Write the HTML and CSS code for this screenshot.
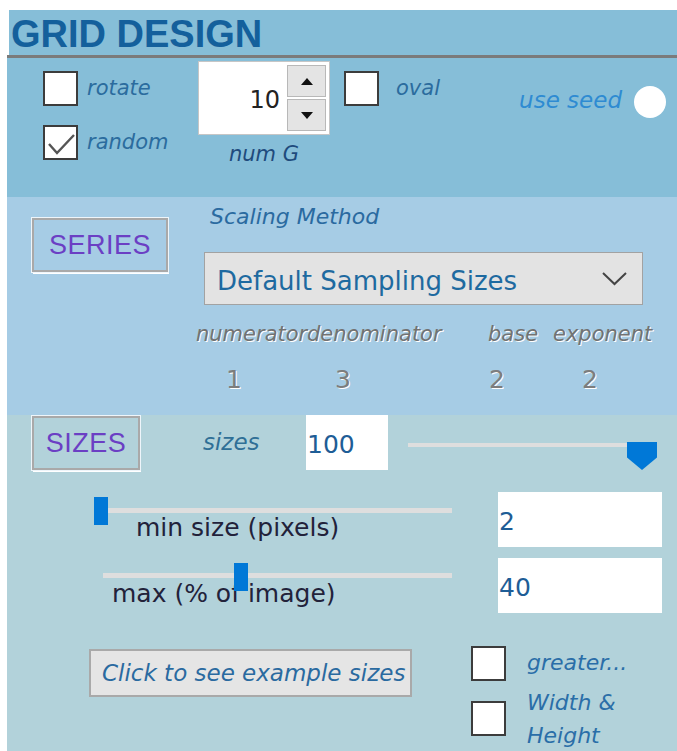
FILE: index.html
```html
<!DOCTYPE html>
<html lang="en">
<head>
<meta charset="utf-8">
<title>Grid Design</title>
<link rel="stylesheet" href="styles.css">
</head>
<body>
<div class="panel">
  <header class="head"><h1>GRID DESIGN</h1></header>
  <div class="rule"></div>

  <section class="opts">
    <div class="checks">
      <label class="chk"><span class="box"></span><span class="lbl">rotate</span></label>
      <label class="chk"><span class="box"><svg width="31" height="31" viewBox="0 0 31 31"><polyline points="4,17 12,26 29,8" fill="none" stroke="#555" stroke-width="2.4"/></svg></span><span class="lbl">random</span></label>
    </div>
    <div class="spin-col">
      <div class="spin">
        <span class="spin-val">10</span>
        <div class="spin-btns">
          <span><svg width="12" height="7" viewBox="0 0 12 7"><polygon points="6,0 12,7 0,7" fill="#111"/></svg></span>
          <span><svg width="12" height="7" viewBox="0 0 12 7"><polygon points="0,0 12,0 6,7" fill="#111"/></svg></span>
        </div>
      </div>
      <div class="spin-cap">num G</div>
    </div>
    <label class="chk oval"><span class="box"></span><span class="lbl">oval</span></label>
    <div class="seed"><span class="seed-lbl">use seed</span><span class="radio"></span></div>
  </section>

  <section class="series">
    <div class="tab-btn series-btn">SERIES</div>
    <div class="series-body">
      <div class="sm-label">Scaling Method</div>
      <div class="select">
        <span>Default Sampling Sizes</span>
        <svg width="25" height="15" viewBox="0 0 25 15"><polyline points="1,2 12.5,13 24,2" fill="none" stroke="#444" stroke-width="2"/></svg>
      </div>
      <div class="fields">
        <span class="f-num">numerator</span><span class="f-den">denominator</span><span class="f-base">base</span><span>exponent</span>
      </div>
      <div class="vals">
        <span class="v1">1</span><span class="v2">3</span><span class="v3">2</span><span class="v4">2</span>
      </div>
    </div>
  </section>

  <section class="sizes">
    <div class="row1">
      <div class="tab-btn sizes-btn">SIZES</div>
      <div class="sz-label">sizes</div>
      <div class="value-box small">100</div>
      <div class="slider sizes-slider">
        <div class="track"></div>
        <div class="thumb pent"></div>
      </div>
    </div>

    <div class="range-row r-min">
      <div class="range">
        <div class="track"></div>
        <div class="thumb bar" style="left:0px"></div>
        <div class="range-cap">min size (pixels)</div>
      </div>
      <div class="value-box">2</div>
    </div>

    <div class="range-row r-max">
      <div class="range">
        <div class="track"></div>
        <div class="thumb bar" style="left:140px"></div>
        <div class="range-cap">max (% of image)</div>
      </div>
      <div class="value-box">40</div>
    </div>

    <div class="row4">
      <div class="example-btn">Click to see example sizes</div>
      <div class="opt-checks">
        <label class="chk"><span class="box"></span><span class="lbl">greater...</span></label>
        <label class="chk wh"><span class="box"></span><span class="lbl">Width &amp; Height</span></label>
      </div>
    </div>
  </section>
</div>
</body>
</html>
```

FILE: styles.css
```css
* { box-sizing: border-box; }

html, body { margin: 0; padding: 0; }

body {
  background: #fff;
  padding: 10px 0 0 7px;
  width: 677px;
  height: 751px;
  overflow: hidden;
  font-family: "DejaVu Sans", Verdana, sans-serif;
}

.panel { width: 670px; }

/* title bar */
.head {
  margin-left: 2px;
  height: 45px;
  background: #86bed8;
  padding: 4px 0 0 2px;
}
.head h1 {
  margin: 0;
  font: bold 38px/41px "Liberation Sans", Arial, sans-serif;
  color: #14609c;
}
.rule { height: 3px; background: #7b7b7b; }

/* shared checkbox */
.chk { display: flex; align-items: flex-start; gap: 9px; }
.box {
  width: 35px;
  height: 35px;
  flex: none;
  border: 2px solid #3c3c3c;
  background: #fff;
}
.box svg { display: block; }
.lbl {
  font-style: italic;
  font-size: 21px;
  line-height: 35px;
  color: #2b6c9e;
}

/* options block */
.opts {
  height: 139px;
  background: #86bed8;
  display: flex;
  align-items: flex-start;
  padding: 0 11px 0 36px;
}
.checks {
  margin-top: 13px;
  width: 155px;
  display: flex;
  flex-direction: column;
  gap: 19px;
}
.spin-col { margin-top: 3px; width: 132px; }
.spin {
  height: 74px;
  background: #fff;
  border: 1px solid #c6c6c6;
  display: flex;
  align-items: center;
  padding: 3px 3px 3px 0;
}
.spin-val {
  flex: 1;
  text-align: right;
  padding: 4px 7px 0 0;
  font-size: 24px;
  color: #222;
}
.spin-btns {
  width: 39px;
  height: 100%;
  display: flex;
  flex-direction: column;
  gap: 2px;
}
.spin-btns span {
  flex: 1;
  background: #e4e4e4;
  border: 1px solid #b8b8b8;
  display: flex;
  align-items: center;
  justify-content: center;
}
.spin-cap {
  margin-top: 7px;
  text-align: center;
  font-style: italic;
  font-size: 21px;
  line-height: 24px;
  color: #1f4b7d;
}
.oval { margin: 13px 0 0 14px; gap: 17px; }
.seed {
  margin: 28px 0 0 auto;
  display: flex;
  align-items: center;
  gap: 12px;
}
.seed-lbl {
  font-style: italic;
  font-size: 23px;
  color: #2e8bd2;
  margin-bottom: 4px;
}
.radio {
  width: 32px;
  height: 32px;
  border-radius: 50%;
  background: #fff;
}

/* tab style buttons */
.tab-btn {
  height: 54px;
  border: 2px solid #a9a9a9;
  box-shadow: 0 0 0 1px #eef5fa, 1px 2px 0 0 #fff;
  font: 27px "Liberation Sans", Arial, sans-serif;
  letter-spacing: 0.5px;
  color: #6b3fc4;
  display: flex;
  align-items: center;
  justify-content: center;
  flex: none;
}

/* series block */
.series {
  height: 218px;
  background: #a6cce5;
  display: flex;
  align-items: flex-start;
  padding-left: 25px;
}
.series-btn { margin-top: 21px; width: 136px; }
.series-body { margin-left: 28px; }
.sm-label {
  margin: 7px 0 0 14px;
  font-style: italic;
  font-size: 22px;
  line-height: 26px;
  color: #2a6aa0;
}
.select {
  margin: 22px 0 0 8px;
  width: 439px;
  height: 53px;
  background: #e3e3e3;
  border: 1px solid #a2a2a2;
  display: flex;
  align-items: center;
  justify-content: space-between;
  padding: 4px 15px 0 12px;
  font-size: 26px;
  color: #1e6aa0;
}
.select svg { margin-top: -4px; }
.fields {
  margin-top: 16px;
  display: flex;
  white-space: nowrap;
  font-style: italic;
  font-size: 21px;
  line-height: 26px;
  color: #727272;
  text-shadow: 1px 1px 0 #fff;
}
.f-num { width: 111px; }
.f-den { width: 181px; }
.f-base { width: 65px; }
.vals {
  margin-top: 18px;
  display: flex;
  font-size: 25px;
  line-height: 30px;
  color: #7d7d7d;
  text-shadow: 1px 1px 0 #fff;
}
.vals span { width: 40px; text-align: center; }
.v1 { margin-left: 18px; }
.v2 { margin-left: 69px; }
.v3 { margin-left: 114px; }
.v4 { margin-left: 53px; }

/* sizes block */
.sizes {
  height: 336px;
  background: #b2d2da;
  overflow: hidden;
}
.row1 {
  display: flex;
  align-items: flex-start;
  padding-left: 25px;
}
.sizes-btn { margin-top: 1px; width: 108px; }
.sz-label {
  width: 103px;
  margin: 13px 0 0 63px;
  font-style: italic;
  font-size: 23px;
  line-height: 28px;
  color: #2f6f96;
}
.value-box {
  flex: none;
  margin-left: 46px;
  width: 164px;
  height: 55px;
  background: #fff;
  display: flex;
  align-items: center;
  padding: 3px 0 0 1px;
  font-size: 25px;
  color: #1e5d96;
}
.value-box.small { margin-left: 0; width: 82px; }

.slider { position: relative; }
.track { height: 5px; background: #dedede; }
.thumb { position: absolute; background: #0078d7; }

.sizes-slider { margin-left: 20px; width: 249px; height: 55px; }
.sizes-slider .track { margin-top: 28px; width: 247px; height: 4px; }
.pent {
  left: 219px;
  top: 27px;
  width: 30px;
  height: 28px;
  clip-path: polygon(0 0, 100% 0, 100% 55%, 50% 100%, 0 55%);
}

.range-row {
  display: flex;
  align-items: flex-start;
  padding-left: 87px;
}
.r-min { margin-top: 22px; }
.r-max { margin-top: 11px; }
.range { position: relative; width: 358px; height: 55px; flex: none; }
.bar { top: 5px; width: 14px; height: 28px; z-index: 1; }
.range-cap {
  font-size: 25px;
  line-height: 30px;
  color: #22223a;
  white-space: nowrap;
}
.r-min .track { margin: 16px 0 0 1px; width: 357px; }
.r-min .range-cap { padding-left: 42px; }
.r-max .track { margin: 15px 0 0 9px; width: 349px; }
.r-max .range-cap { margin-top: 1px; padding-left: 18px; }

.row4 {
  display: flex;
  align-items: flex-start;
  padding-left: 82px;
  margin-top: 33px;
}
.example-btn {
  flex: none;
  margin-top: 3px;
  width: 323px;
  height: 48px;
  background: #e5e5e5;
  border: 2px solid #a9a9a9;
  padding-left: 11px;
  display: flex;
  align-items: center;
  font-style: italic;
  font-size: 23px;
  color: #2a6aa0;
  white-space: nowrap;
}
.opt-checks {
  margin-left: 59px;
  display: flex;
  flex-direction: column;
  gap: 5px;
}
.opt-checks .chk { gap: 21px; }
.opt-checks .lbl { font-size: 22px; line-height: 33px; width: 110px; color: #2a6ea8; }
.wh .box { margin-top: 15px; }
```
